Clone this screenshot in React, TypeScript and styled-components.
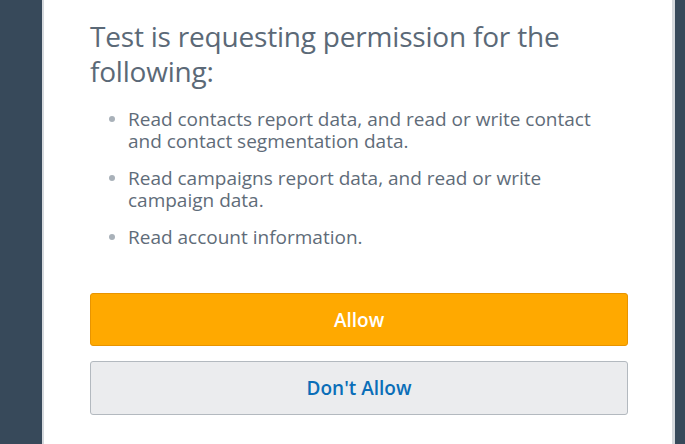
import React from 'react';
import styled, { createGlobalStyle } from 'styled-components';

const GlobalStyle = createGlobalStyle`
  html, body {
    margin: 0;
    padding: 0;
    height: 100%;
    background: #37495a;
  }
  #root {
    height: 100%;
  }
`;

const Page = styled.div`
  height: 100vh;
  box-sizing: border-box;
  padding: 0 10px 0 42px;
  display: flex;
  overflow: hidden;
`;

const Card = styled.div`
  flex: 1;
  box-sizing: border-box;
  background: #fff;
  border-left: 2px solid #d5d9dd;
  border-right: 3px solid #d5d9dd;
  padding: 19px 44px 30px 46px;
  font-family: 'Open Sans', 'Liberation Sans', sans-serif;
  color: #5f6c79;
`;

const Title = styled.h1`
  margin: 0 0 19px;
  font-size: 28px;
  font-weight: 400;
  line-height: 35px;
  letter-spacing: -0.2px;
  color: #5b6977;
`;

const List = styled.ul`
  margin: 0 0 45px;
  padding: 0 20px 0 38px;
  list-style: none;
`;

const Item = styled.li`
  position: relative;
  font-size: 19px;
  line-height: 22px;

  & + & {
    margin-top: 15px;
  }

  &::before {
    content: '';
    position: absolute;
    left: -19px;
    top: 8px;
    width: 6px;
    height: 6px;
    border-radius: 50%;
    background: #a9b1b9;
  }
`;

const Button = styled.button<{ $primary?: boolean }>`
  display: block;
  width: 100%;
  box-sizing: border-box;
  height: ${(p) => (p.$primary ? '53px' : '54px')};
  margin-bottom: 15px;
  border-radius: 3px;
  border: 1px solid ${(p) => (p.$primary ? '#e89400' : '#b3b9bf')};
  background: ${(p) => (p.$primary ? '#ffa900' : '#ebecee')};
  color: ${(p) => (p.$primary ? '#fff' : '#0a6eb8')};
  font-family: 'Open Sans', 'Liberation Sans', sans-serif;
  font-size: 19px;
  font-weight: 600;
  cursor: pointer;
`;

const permissions = [
  'Read contacts report data, and read or write contact and contact segmentation data.',
  'Read campaigns report data, and read or write campaign data.',
  'Read account information.',
];

export default function App() {
  return (
    <>
      <GlobalStyle />
      <Page>
        <Card>
          <Title>Test is requesting permission for the following:</Title>
          <List>
            {permissions.map((p) => (
              <Item key={p}>{p}</Item>
            ))}
          </List>
          <Button $primary>Allow</Button>
          <Button>Don't Allow</Button>
        </Card>
      </Page>
    </>
  );
}
